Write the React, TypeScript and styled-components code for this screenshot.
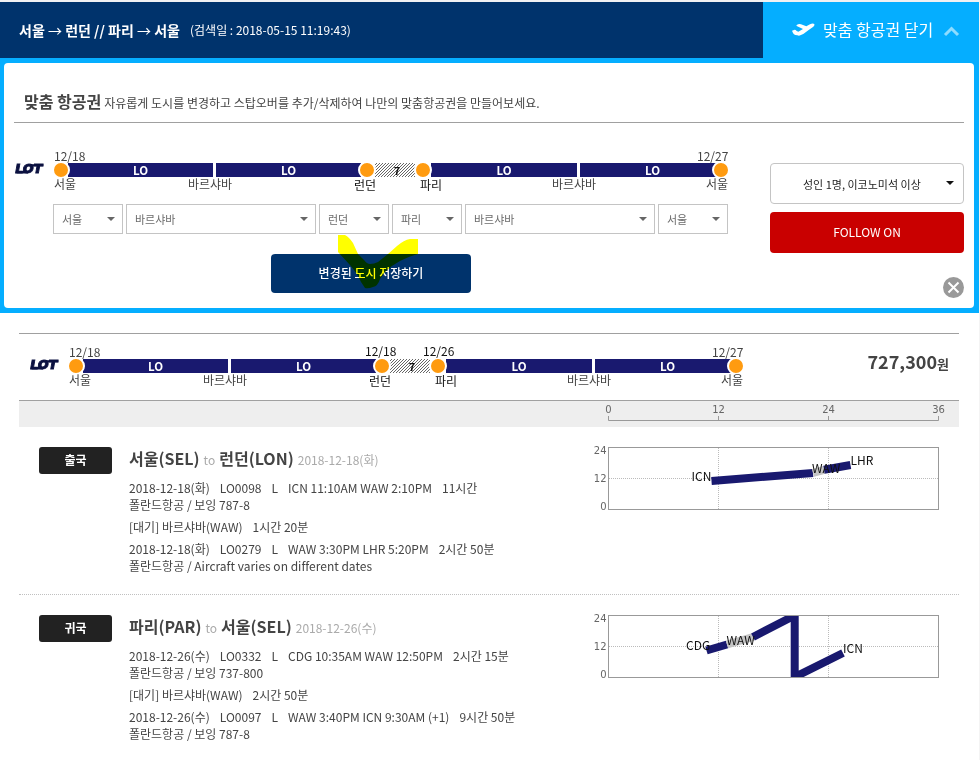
import React from 'react';
import styled, { createGlobalStyle, css } from 'styled-components';

const NAVY = '#00336c';
const SKY = '#05aeff';
const TRACK = '#19196f';

const Global = createGlobalStyle`
  * { box-sizing: border-box; }
  body {
    margin: 0;
    background: #fff;
    overflow: hidden;
    color: #444;
    font: 12px/16px "Noto Sans CJK KR", "Noto Sans", sans-serif;
    font-variant-ligatures: none;
  }
  button { font: inherit; margin: 0; padding: 0; border: 0; cursor: pointer; }
`;

const Page = styled.div`
  width: 980px;
  height: 760px;
  border-top: 2px solid #f1f1f3;
  border-right: 1px solid #f4f4f4;
`;

const Header = styled.header`
  display: flex;
  height: 56px;
  background: ${NAVY};
  color: #fff;
`;

const Route = styled.div`
  display: flex;
  align-items: center;
  width: 763px;
  padding-left: 19px;
`;

const RouteName = styled.strong`
  font-size: 14px;
  width: 171px;
  white-space: nowrap;
`;

const Arrow = styled.span`
  font-weight: 400;
`;

const Searched = styled.span`
  white-space: nowrap;
`;

const CloseTab = styled.button`
  display: flex;
  align-items: center;
  flex: 1;
  padding-left: 28px;
  background: ${SKY};
  color: #fff;
  font-size: 16px;
  white-space: nowrap;
`;

const CloseTabText = styled.span`
  margin: 0 10px 2px 8px;
`;

const Frame = styled.section`
  height: 255px;
  padding: 5px 5px 5px 4px;
  background: ${SKY};
`;

const Panel = styled.div`
  height: 245px;
  padding: 0 10px;
  border-radius: 4px;
  background: #fff;
`;

const PanelTitle = styled.h2`
  display: flex;
  align-items: baseline;
  gap: 3px;
  height: 60px;
  margin: 0;
  padding: 28px 0 0 10px;
  border-bottom: 1px solid #a0a0a0;
  font-size: 16px;
  line-height: 20px;
`;

const PanelHint = styled.span`
  font-size: 12px;
  font-weight: 400;
`;

const PanelBody = styled.div`
  display: flex;
  height: 185px;
`;

const Planner = styled.div`
  width: 756px;
  padding-top: 26px;
`;

const Itinerary = styled.div`
  display: flex;
`;

const LogoSlot = styled.div`
  width: 38px;
  padding-top: 14px;
  line-height: 0;
`;

const Line = styled.div`
  width: 680px;
`;

const LabelRow = styled.div<{ $kind: 'date' | 'city' }>`
  display: flex;
  height: ${p => (p.$kind === 'date' ? 12 : 16)}px;
  margin-top: ${p => (p.$kind === 'date' ? 0 : -2)}px;
`;

const Label = styled.span<{ $x: number; $w: number; $dark?: boolean; $up?: boolean }>`
  flex: none;
  z-index: 2;
  width: ${p => p.$w}px;
  margin: -1px 0 0 ${p => p.$x}px;
  line-height: 16px;
  white-space: nowrap;
  ${p => p.$dark && css`color: #111; margin-top: ${p.$up ? -2 : 0}px;`}
`;

const Track = styled.div`
  display: flex;
  align-items: center;
  height: 18px;
`;

const Dot = styled.i<{ $tuck: string }>`
  z-index: 1;
  flex: none;
  width: 18px;
  height: 18px;
  margin: ${p => p.$tuck};
  border: 2px solid #fff;
  border-radius: 50%;
  background: #ff9b10;
`;

const Leg = styled.div<{ $after?: number; $w?: number }>`
  flex: none;
  width: ${p => p.$w ?? 145}px;
  height: 14px;
  margin-right: ${p => p.$after ?? 0}px;
  background: ${TRACK};
  color: #fff;
  font-size: 11.5px;
  font-weight: 700;
  line-height: 15px;
  text-align: center;
`;

const Stay = styled.div`
  flex: none;
  width: 40px;
  height: 14px;
  padding-left: 4px;
  background: repeating-linear-gradient(135deg, #fff 0 1.3px, #666 1.3px 2.12px);
  color: #111;
  font-size: 11px;
  font-weight: 700;
  line-height: 15px;
  text-align: center;
`;

const Selects = styled.div`
  display: flex;
  gap: 3px;
  margin: 11px 0 0 39px;
`;

const SelectBox = styled.button<{ $wide?: boolean }>`
  display: flex;
  align-items: center;
  justify-content: space-between;
  width: ${p => (p.$wide ? 190 : 70)}px;
  height: 30px;
  padding: 0 7px 0 8px;
  border: 1px solid #c4c4c4;
  background: #fff;
  color: #6b6b6b;
  font-size: 11px;
`;

const Caret = styled.i<{ $color: string }>`
  border: 4px solid transparent;
  border-top: 4px solid ${p => p.$color};
  border-bottom: 0;
  margin-bottom: 1px;
`;

const SaveWrap = styled.div`
  position: relative;
  width: 200px;
  margin: 20px 0 0 257px;
`;

const SaveButton = styled.button`
  width: 200px;
  height: 39px;
  padding-bottom: 1px;
  border-radius: 4px;
  background: ${NAVY};
  color: #fff;
  font-weight: 500;
`;

const Highlight = styled.svg`
  position: absolute;
  left: 63px;
  top: -22px;
  mix-blend-mode: multiply;
  pointer-events: none;
`;

const Side = styled.div`
  display: flex;
  flex-direction: column;
  align-items: flex-end;
  width: 194px;
  padding-top: 40px;
`;

const Passengers = styled.button`
  display: flex;
  align-items: center;
  justify-content: space-between;
  width: 194px;
  height: 41px;
  padding: 0 9px 0 32px;
  border: 1px solid #c4c4c4;
  border-radius: 4px;
  background: #fff;
  color: #222;
  font-size: 11px;
  white-space: nowrap;
`;

const Follow = styled.button`
  width: 194px;
  height: 41px;
  margin: 8px 0 24px;
  padding-bottom: 2px;
  border-radius: 4px;
  background: #c90000;
  color: #fff;
  font-size: 12px;
`;

const Result = styled.main`
  width: 940px;
  margin: 20px 0 0 19px;
  border-top: 1px solid #a0a0a0;
`;

const Summary = styled.div`
  display: flex;
  justify-content: space-between;
  height: 66px;
  padding: 11px 10px 0;
`;

const Price = styled.strong`
  display: flex;
  align-items: baseline;
  height: 24px;
  margin-top: 4px;
  font-size: 18px;
  line-height: 24px;
`;

const Won = styled.span`
  font-size: 13px;
`;

const AxisBar = styled.div`
  display: flex;
  justify-content: flex-end;
  height: 27px;
  border-top: 1px solid #a0a0a0;
  background: #eee;
`;

const Journey = styled.section<{ $divided?: boolean }>`
  display: flex;
  height: 168px;
  padding: 20px 0 0 20px;
  ${p => p.$divided && css`border-bottom: 1px dotted #c0c0c0;`}
`;

const Badge = styled.div`
  flex: none;
  width: 73px;
  height: 27px;
  border-radius: 3px;
  background: #222;
  color: #fff;
  font-weight: 700;
  line-height: 26px;
  text-align: center;
`;

const Details = styled.div`
  flex: none;
  width: 460px;
  margin-top: -1px;
  padding-left: 17px;
  white-space: nowrap;
`;

const JourneyTitle = styled.h3`
  display: flex;
  align-items: baseline;
  gap: 4px;
  height: 24px;
  margin: 0 0 9px;
  font-size: 16px;
  line-height: 24px;
`;

const Faint = styled.span`
  color: #aaa;
  font-size: 12px;
  font-weight: 400;
`;

const Fields = styled.div<{ $gap?: number }>`
  display: flex;
  gap: 10px;
  height: 17px;
  margin-bottom: ${p => p.$gap ?? 0}px;
  line-height: 17px;
`;

const Drawing = styled.svg`
  flex: none;
  display: block;
  overflow: visible;
`;

const AxisText = styled.text`
  font: 10px "DejaVu Sans", sans-serif;
  fill: #666;
`;

const Airport = styled.text`
  font: 12px "Noto Sans CJK KR", sans-serif;
  fill: #111;
`;

const LogoText = styled.text`
  font: italic 900 12px Inter, "Liberation Sans", sans-serif;
  fill: #0b1140;
  stroke: #0b1140;
  stroke-width: 0.8;
`;

const Logo = () => (
  <Drawing width="30" height="13" viewBox="0 0 30 13">
    <LogoText x="1.5" y="10" textLength="27" lengthAdjust="spacingAndGlyphs">LOT</LogoText>
    <path d="M2.500 9.200H14M16 2.400H29.500" stroke="#0b1140" strokeWidth="2.400" />
  </Drawing>
);

const Plane = () => (
  <Drawing width="24" height="16" viewBox="0 0 72 48">
    <path
      fill="#fff"
      d="M3 26 L11 23 Q14 23 17 27 L22 29 L36 21 L17 12 Q15 10 18 8 L24 6 Q27 5 30 7 L46 13 L57 7 Q65 3 70 6 Q72 9 67 14 L53 24 L41 33 Q38 35 35 37 L28 40 Q24 42 19 40 L13 39 Q8 37 6 33 Z"
    />
  </Drawing>
);

const Timeline = ({ stayDates }: { stayDates?: boolean }) => (
  <Itinerary>
    <LogoSlot><Logo /></LogoSlot>
    <Line>
      <LabelRow $kind="date">
        <Label $x={2} $w={34}>12/18</Label>
        {stayDates ? (
          <>
            <Label $x={262} $w={34} $dark $up>12/18</Label>
            <Label $x={24} $w={34} $dark $up>12/26</Label>
            <Label $x={255} $w={34}>12/27</Label>
          </>
        ) : (
          <Label $x={609} $w={34}>12/27</Label>
        )}
      </LabelRow>
      <Track>
        <Dot $tuck="0 -2px 0 0" />
        <Leg $after={3}>LO</Leg>
        <Leg>LO</Leg>
        <Dot $tuck="0 -1px 0 -3px" />
        <Stay>7</Stay>
        <Dot $tuck="0 -1px" />
        <Leg $after={3} $w={146}>LO</Leg>
        <Leg>LO</Leg>
        <Dot $tuck="0 0 0 -13px" />
      </Track>
      <LabelRow $kind="city">
        <Label $x={2} $w={23}>서울</Label>
        <Label $x={111} $w={45}>바르샤바</Label>
        <Label $x={121} $w={23} $dark>런던</Label>
        <Label $x={43} $w={23} $dark>파리</Label>
        <Label $x={109} $w={45}>바르샤바</Label>
        <Label $x={109} $w={23}>서울</Label>
      </LabelRow>
    </Line>
  </Itinerary>
);

const CITIES = ['서울', '바르샤바', '런던', '파리', '바르샤바', '서울'];

type Mark = { x: number; y: number; name: string };
type ChartProps = { id: string; before: string; stay: string; after: string; marks: Mark[] };

const Chart = ({ id, before, stay, after, marks }: ChartProps) => (
  <Drawing width="366" height="66" viewBox="0 0 366 66">
    <clipPath id={id}><rect x="37" y="1" width="329" height="61" /></clipPath>
    <g stroke="#bbb" strokeDasharray="1 1" fill="none">
      <path d="M37 31.5H366M146.5 1V62M256.5 1V62" />
    </g>
    <g clipPath={`url(#${id})`} fill="none" strokeWidth="8">
      <path d={before} stroke={TRACK} />
      <path d={stay} stroke="#c4c4c4" />
      <path d={after} stroke={TRACK} />
    </g>
    <rect x="36.5" y="0.5" width="330" height="62" fill="none" stroke="#999" />
    <AxisText x="34.5" y="7" textAnchor="end">24</AxisText>
    <AxisText x="34.5" y="35" textAnchor="end">12</AxisText>
    <AxisText x="34.5" y="63" textAnchor="end">0</AxisText>
    {marks.map(m => <Airport key={m.name} x={m.x} y={m.y}>{m.name}</Airport>)}
  </Drawing>
);

export default function App() {
  return (
    <>
      <Global />
      <Page>
        <Header>
          <Route>
            <RouteName>서울 <Arrow>→</Arrow> 런던 // 파리 <Arrow>→</Arrow> 서울</RouteName>
            <Searched>(검색일 : 2018-05-15 11:19:43)</Searched>
          </Route>
          <CloseTab>
            <Plane />
            <CloseTabText>맞춤 항공권 닫기</CloseTabText>
            <Drawing width="16" height="12" viewBox="0 0 16 12">
              <path d="M2 11L8.500 4.500L15 11" fill="none" stroke="#8edcff" strokeWidth="3" />
            </Drawing>
          </CloseTab>
        </Header>

        <Frame>
          <Panel>
            <PanelTitle>
              맞춤 항공권
              <PanelHint>자유롭게 도시를 변경하고 스탑오버를 추가/삭제하여 나만의 맞춤항공권을 만들어보세요.</PanelHint>
            </PanelTitle>
            <PanelBody>
              <Planner>
                <Timeline />
                <Selects>
                  {CITIES.map((c, i) => (
                    <SelectBox key={i} $wide={c.length > 2}>{c}<Caret $color="#666" /></SelectBox>
                  ))}
                </Selects>
                <SaveWrap>
                  <SaveButton>변경된 도시 저장하기</SaveButton>
                  <Highlight width="90" height="60" viewBox="0 0 90 60">
                    <path
                      fill="#ffff00"
                      d="M4 3H11Q15 5 19 11L24 22L30 28Q33 32 36 32Q40 32 44 30L54 22L63 14Q70 8 76 7H84V22Q76 24 66 29Q58 33 51 40L46 47Q44 54 39 55Q34 57 31 56L27 50Q24 43 20 38L16 33L4 20Z"
                    />
                  </Highlight>
                </SaveWrap>
              </Planner>
              <Side>
                <Passengers>성인 1명, 이코노미석 이상<Caret $color="#111" /></Passengers>
                <Follow>FOLLOW ON</Follow>
                <Drawing width="21" height="21" viewBox="0 0 21 21">
                  <circle cx="10.5" cy="10.5" r="10.5" fill="#999" />
                  <path d="M5.500 5.500L15.500 15.500M15.500 5.500L5.500 15.500" stroke="#fff" strokeWidth="2" />
                </Drawing>
              </Side>
            </PanelBody>
          </Panel>
        </Frame>

        <Result>
          <Summary>
            <Timeline stayDates />
            <Price>727,300<Won>원</Won></Price>
          </Summary>
          <AxisBar>
            <Drawing width="360" height="26" viewBox="0 0 360 26">
              <path d="M9.5 15V19.5H339.5V15M119.5 15V19.5M229.5 15V19.5" fill="none" stroke="#999" />
              <AxisText x="9.5" y="12" textAnchor="middle">0</AxisText>
              <AxisText x="119.5" y="12" textAnchor="middle">12</AxisText>
              <AxisText x="229.5" y="12" textAnchor="middle">24</AxisText>
              <AxisText x="339.5" y="12" textAnchor="middle">36</AxisText>
            </Drawing>
          </AxisBar>

          <Journey $divided>
            <Badge>출국</Badge>
            <Details>
              <JourneyTitle>서울(SEL) <Faint>to</Faint> 런던(LON) <Faint>2018-12-18(화)</Faint></JourneyTitle>
              <Fields><span>2018-12-18(화)</span><span>LO0098</span><span>L</span><span>ICN 11:10AM WAW 2:10PM</span><span>11시간</span></Fields>
              <Fields $gap={5}>폴란드항공 / 보잉 787-8</Fields>
              <Fields $gap={5}><span>[대기] 바르샤바(WAW)</span><span>1시간 20분</span></Fields>
              <Fields><span>2018-12-18(화)</span><span>LO0279</span><span>L</span><span>WAW 3:30PM LHR 5:20PM</span><span>2시간 50분</span></Fields>
              <Fields>폴란드항공 / Aircraft varies on different dates</Fields>
            </Details>
            <Chart
              id="outbound"
              before="M139.5 34L241 26"
              stay="M241 26L252 22.8"
              after="M252 22.8L278.500 18"
              marks={[{ x: 119.5, y: 34, name: 'ICN' }, { x: 240, y: 26, name: 'WAW' }, { x: 278.5, y: 18, name: 'LHR' }]}
            />
          </Journey>

          <Journey>
            <Badge>귀국</Badge>
            <Details>
              <JourneyTitle>파리(PAR) <Faint>to</Faint> 서울(SEL) <Faint>2018-12-26(수)</Faint></JourneyTitle>
              <Fields><span>2018-12-26(수)</span><span>LO0332</span><span>L</span><span>CDG 10:35AM WAW 12:50PM</span><span>2시간 15분</span></Fields>
              <Fields $gap={5}>폴란드항공 / 보잉 737-800</Fields>
              <Fields $gap={5}><span>[대기] 바르샤바(WAW)</span><span>2시간 50분</span></Fields>
              <Fields><span>2018-12-26(수)</span><span>LO0097</span><span>L</span><span>WAW 3:40PM ICN 9:30AM (+1)</span><span>9시간 50분</span></Fields>
              <Fields>폴란드항공 / 보잉 787-8</Fields>
            </Details>
            <Chart
              id="inbound"
              before="M134.500 35.500L155 29.500"
              stay="M155 29.500L181 22"
              after="M181 22L222.700 0.500V62L271 38"
              marks={[{ x: 114, y: 35, name: 'CDG' }, { x: 154.5, y: 30, name: 'WAW' }, { x: 271, y: 38, name: 'ICN' }]}
            />
          </Journey>
        </Result>
      </Page>
    </>
  );
}
